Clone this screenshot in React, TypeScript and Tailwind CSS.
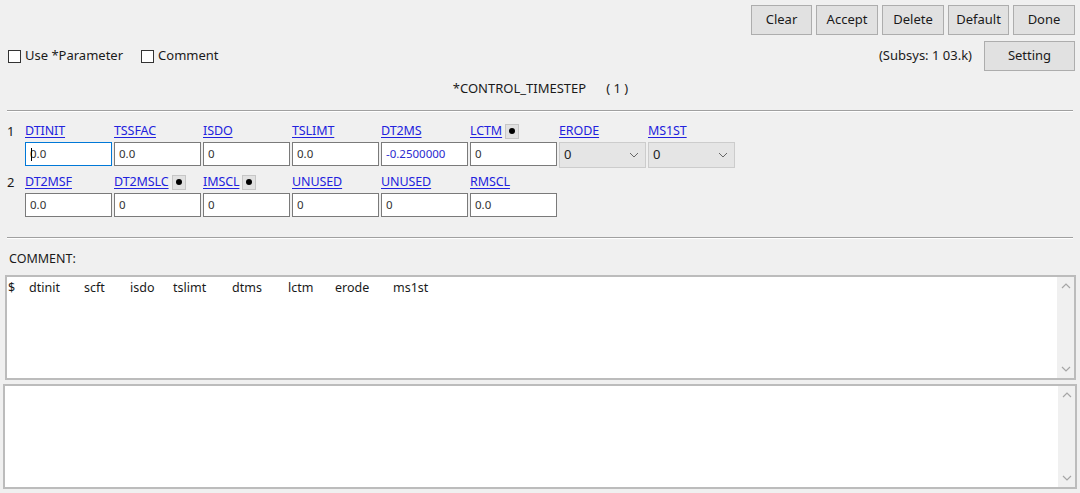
import React from "react";

const font = { fontFamily: '"Noto Sans", "Open Sans", Arial, sans-serif' };

function Btn({ label, w }: { label: string; w: string }) {
  return (
    <div
      className={`${w} h-[30px] flex items-center justify-center bg-[#e1e1e1] border border-[#adadad] text-[13px] text-[#1a1a1a]`}
    >
      {label}
    </div>
  );
}

function Check({ label }: { label: string }) {
  return (
    <div className="flex items-center gap-[4px]">
      <div className="w-[13px] h-[13px] bg-white border border-[#333]" />
      <span className="text-[13px] text-[#1a1a1a]">{label}</span>
    </div>
  );
}

function Dot() {
  return (
    <div className="ml-[3px] w-[14px] h-[15px] bg-[#e1e1e1] border border-[#c6c6c6] flex items-center justify-center">
      <div className="w-[6px] h-[6px] rounded-full bg-black" />
    </div>
  );
}

function Label({ text, dot }: { text: string; dot?: boolean }) {
  return (
    <div className="w-[89px] h-[16px] flex items-center">
      <span className="text-[12.5px] leading-none text-[#2222dd] underline underline-offset-[2px] tracking-[-0.1px]">
        {text}
      </span>
      {dot && <Dot />}
    </div>
  );
}

function Input({ v, blue, focus }: { v: string; blue?: boolean; focus?: boolean }) {
  return (
    <div className="w-[89px] pr-[2px]">
      <div
        className={`relative h-[24px] bg-white border ${
          focus ? "border-[#0078d7]" : "border-[#7a7a7a]"
        } flex items-center pl-[4px] text-[11.5px] ${blue ? "text-[#2a2ad0]" : "text-[#333]"}`}
      >
        {v}
        {focus && <div className="absolute left-[5px] top-[5px] w-[1px] h-[13px] bg-black" />}
      </div>
    </div>
  );
}

function Select({ v }: { v: string }) {
  return (
    <div className="w-[89px] pr-[2px]">
      <div className="h-[26px] bg-[#e5e5e5] border border-[#cccccc] flex items-center justify-between pl-[4px] pr-[6px] text-[13px] text-[#222]">
        <span>{v}</span>
        <svg width="10" height="6" viewBox="0 0 10 6">
          <path d="M1 1 L5 5 L9 1" fill="none" stroke="#666" strokeWidth="1" />
        </svg>
      </div>
    </div>
  );
}

function Chevron({ up }: { up?: boolean }) {
  return (
    <svg width="10" height="6" viewBox="0 0 10 6">
      <path d={up ? "M1 5 L5 1 L9 5" : "M1 1 L5 5 L9 1"} fill="none" stroke="#a6a6a6" strokeWidth="1.2" />
    </svg>
  );
}

function TextBox({ children, cls }: { children?: React.ReactNode; cls: string }) {
  return (
    <div className={`${cls} flex bg-white border-2 border-[#bcbcbc]`}>
      <div className="flex-1 pt-[2px] pl-[1px]">{children}</div>
      <div className="w-[17px] bg-[#f0f0f0] flex flex-col items-center justify-between py-[6px]">
        <Chevron up />
        <Chevron />
      </div>
    </div>
  );
}

export default function App() {
  const words: [string, string][] = [
    ["$", "w-[21px]"],
    ["dtinit", "w-[55px]"],
    ["scft", "w-[46px]"],
    ["isdo", "w-[43px]"],
    ["tslimt", "w-[59px]"],
    ["dtms", "w-[56px]"],
    ["lctm", "w-[47px]"],
    ["erode", "w-[58px]"],
    ["ms1st", "w-[60px]"],
  ];
  return (
    <div style={font} className="w-[1080px] h-[493px] bg-[#f0f0f0] flex flex-col overflow-hidden text-[#1a1a1a]">
      {/* top buttons */}
      <div className="flex justify-end gap-[4px] pt-[5px] pr-[5px]">
        <Btn label="Clear" w="w-[61px]" />
        <Btn label="Accept" w="w-[62px]" />
        <Btn label="Delete" w="w-[62px]" />
        <Btn label="Default" w="w-[61px]" />
        <Btn label="Done" w="w-[62px]" />
      </div>
      {/* second row */}
      <div className="flex items-center justify-between pl-[8px] pr-[5px] mt-[6px]">
        <div className="flex items-center gap-[18px]">
          <Check label="Use *Parameter" />
          <Check label="Comment" />
        </div>
        <div className="flex items-center gap-[12px]">
          <span className="text-[13px]">(Subsys: 1 03.k)</span>
          <Btn label="Setting" w="w-[91px]" />
        </div>
      </div>
      {/* title */}
      <div className="h-[39px] pb-[3px] flex items-center justify-center text-[13px] pl-[1px]">
        <span>*CONTROL_TIMESTEP</span>
        <span className="ml-[20px]">( 1 )</span>
      </div>
      <div className="mx-[7px] h-[2px] border-t border-[#a0a0a0] border-b border-b-white" />
      {/* row 1 */}
      <div className="mt-[11px] flex">
        <div className="w-[25px] pl-[7px] text-[13px] leading-[16px]">1</div>
        <div className="flex flex-col">
          <div className="flex">
            <Label text="DTINIT" />
            <Label text="TSSFAC" />
            <Label text="ISDO" />
            <Label text="TSLIMT" />
            <Label text="DT2MS" />
            <Label text="LCTM" dot />
            <Label text="ERODE" />
            <Label text="MS1ST" />
          </div>
          <div className="flex items-start mt-[3px]">
            <Input v="0.0" focus />
            <Input v="0.0" />
            <Input v="0" />
            <Input v="0.0" />
            <Input v="-0.2500000" blue />
            <Input v="0" />
            <div className="flex">
              <Select v="0" />
              <Select v="0" />
            </div>
          </div>
        </div>
      </div>
      {/* row 2 */}
      <div className="mt-[6px] flex">
        <div className="w-[25px] pl-[7px] text-[13px] leading-[16px]">2</div>
        <div className="flex flex-col">
          <div className="flex">
            <Label text="DT2MSF" />
            <Label text="DT2MSLC" dot />
            <Label text="IMSCL" dot />
            <Label text="UNUSED" />
            <Label text="UNUSED" />
            <Label text="RMSCL" />
          </div>
          <div className="flex mt-[3px]">
            <Input v="0.0" />
            <Input v="0" />
            <Input v="0" />
            <Input v="0" />
            <Input v="0" />
            <Input v="0.0" />
          </div>
        </div>
      </div>
      <div className="mt-[20px] mx-[7px] h-[2px] border-t border-[#a0a0a0] border-b border-b-white" />
      <div className="mt-[11px] pl-[9px] text-[12.5px] h-[18px] leading-[18px]">COMMENT:</div>
      <TextBox cls="mt-[7px] ml-[5px] mr-[4px] h-[105px]">
        <div className="flex text-[12.5px] text-[#1a1a1a] leading-[18px]">
          {words.map(([w, c]) => (
            <span key={w} className={`${c} inline-block`}>
              {w}
            </span>
          ))}
        </div>
      </TextBox>
      <TextBox cls="mt-[4px] ml-[3px] mr-[3px] h-[105px]" />
    </div>
  );
}
